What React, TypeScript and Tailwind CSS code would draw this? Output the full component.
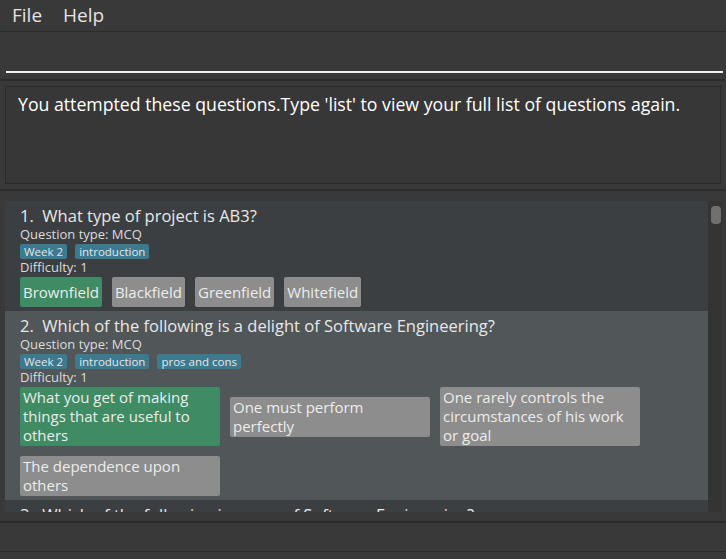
const FONT = { fontFamily: '"Open Sans", "Noto Sans", Arial, sans-serif' }

type Option = { text: string; correct?: boolean }
type Question = { no: number; title: string; tags: string[]; options: Option[]; selected?: boolean }

const QUESTIONS: Question[] = [
  {
    no: 1,
    title: 'What type of project is AB3?',
    tags: ['Week 2', 'introduction'],
    options: [
      { text: 'Brownfield', correct: true },
      { text: 'Blackfield' },
      { text: 'Greenfield' },
      { text: 'Whitefield' },
    ],
  },
  {
    no: 2,
    title: 'Which of the following is a delight of Software Engineering?',
    tags: ['Week 2', 'introduction', 'pros and cons'],
    selected: true,
    options: [
      { text: 'What you get of making things that are useful to others', correct: true },
      { text: 'One must perform perfectly' },
      { text: 'One rarely controls the circumstances of his work or goal' },
      { text: 'The dependence upon others' },
    ],
  },
  {
    no: 3,
    title: 'Which of the following is a woe of Software Engineering?',
    tags: ['Week 2', 'introduction'],
    options: [],
  },
]

function QuestionCard({ q }: { q: Question }) {
  return (
    <div className={`px-[15px] pt-[4px] pb-[4px] ${q.selected ? 'bg-[#515658]' : 'bg-[#3c3f41]'}`}>
      <div className="text-[16.5px] leading-[22px] text-[#e8e8e8]">
        {q.no}.&nbsp;&nbsp;{q.title}
      </div>
      <div className="text-[13px] leading-[15px] font-medium text-[#dcdcdc]">Question type: MCQ</div>
      <div className="mt-[2px] flex gap-[8px]">
        {q.tags.map((t) => (
          <span
            key={t}
            className="rounded-[2px] bg-[#3b7a8f] px-[4px] text-[11.5px] leading-[15px] text-[#e6e6e6]"
          >
            {t}
          </span>
        ))}
      </div>
      <div className="text-[13px] leading-[16px] font-medium text-[#dcdcdc]">Difficulty: 1</div>
      <div className="mt-[2px] flex flex-wrap items-center gap-[10px]">
        {q.options.map((o) =>
          o.text.length > 20 ? (
            <div
              key={o.text}
              className={`w-[200px] rounded-[2px] px-[3px] py-[1px] text-[15px] leading-[19px] text-[#ececec] ${
                o.correct ? 'bg-[#3f8b63]' : 'bg-[#8c8d8c]'
              }`}
            >
              {o.text}
            </div>
          ) : (
            <div
              key={o.text}
              className={`rounded-[2px] px-[3px] py-[5px] text-[15px] leading-[20px] text-[#ececec] ${
                o.correct ? 'bg-[#3f8b63]' : 'bg-[#8c8d8c]'
              }`}
            >
              {o.text}
            </div>
          ),
        )}
      </div>
    </div>
  )
}

export default function App() {
  return (
    <div className="flex h-[559px] w-[726px] flex-col overflow-hidden bg-[#393939]" style={FONT}>
      <div className="flex h-[32px] items-center gap-[21px] border-b border-[#2c2c2c] pl-[12px] text-[19px] text-[#e4e4e4]">
        <span>File</span>
        <span>Help</span>
      </div>
      <div className="flex h-[47px] flex-col justify-end pl-[6px] pr-[3px] pb-[6px]">
        <div className="h-[2px] bg-[#f2f2f2]" />
      </div>
      <div className="h-[2px] bg-[#2c2c2c]" />
      <div className="px-[5px] pt-[5px] pb-[5px]">
        <div className="h-[98px] border border-[#2a2a2a] bg-[#373737] px-[12px] pt-[5px] text-[17.7px] leading-[24px] text-white">
          You attempted these questions.Type 'list' to view your full list of questions again.
        </div>
      </div>
      <div className="h-[2px] bg-[#2e2e2e]" />
      <div className="flex h-[330px] pt-[10px] pl-[5px]">
        <div className="h-[311px] w-[703px] overflow-hidden">
          {QUESTIONS.map((q) => (
            <QuestionCard key={q.no} q={q} />
          ))}
        </div>
        <div className="h-[311px] w-[14px] bg-[#343434] pt-[5px] pl-[3px]">
          <div className="h-[18px] w-[10px] rounded-[4px] bg-[#707070]" />
        </div>
      </div>
      <div className="h-[2px] bg-[#2b2b2b]" />
      <div className="h-[29px] border-b border-[#2b2b2b]" />
      <div className="flex-1" />
    </div>
  )
}
